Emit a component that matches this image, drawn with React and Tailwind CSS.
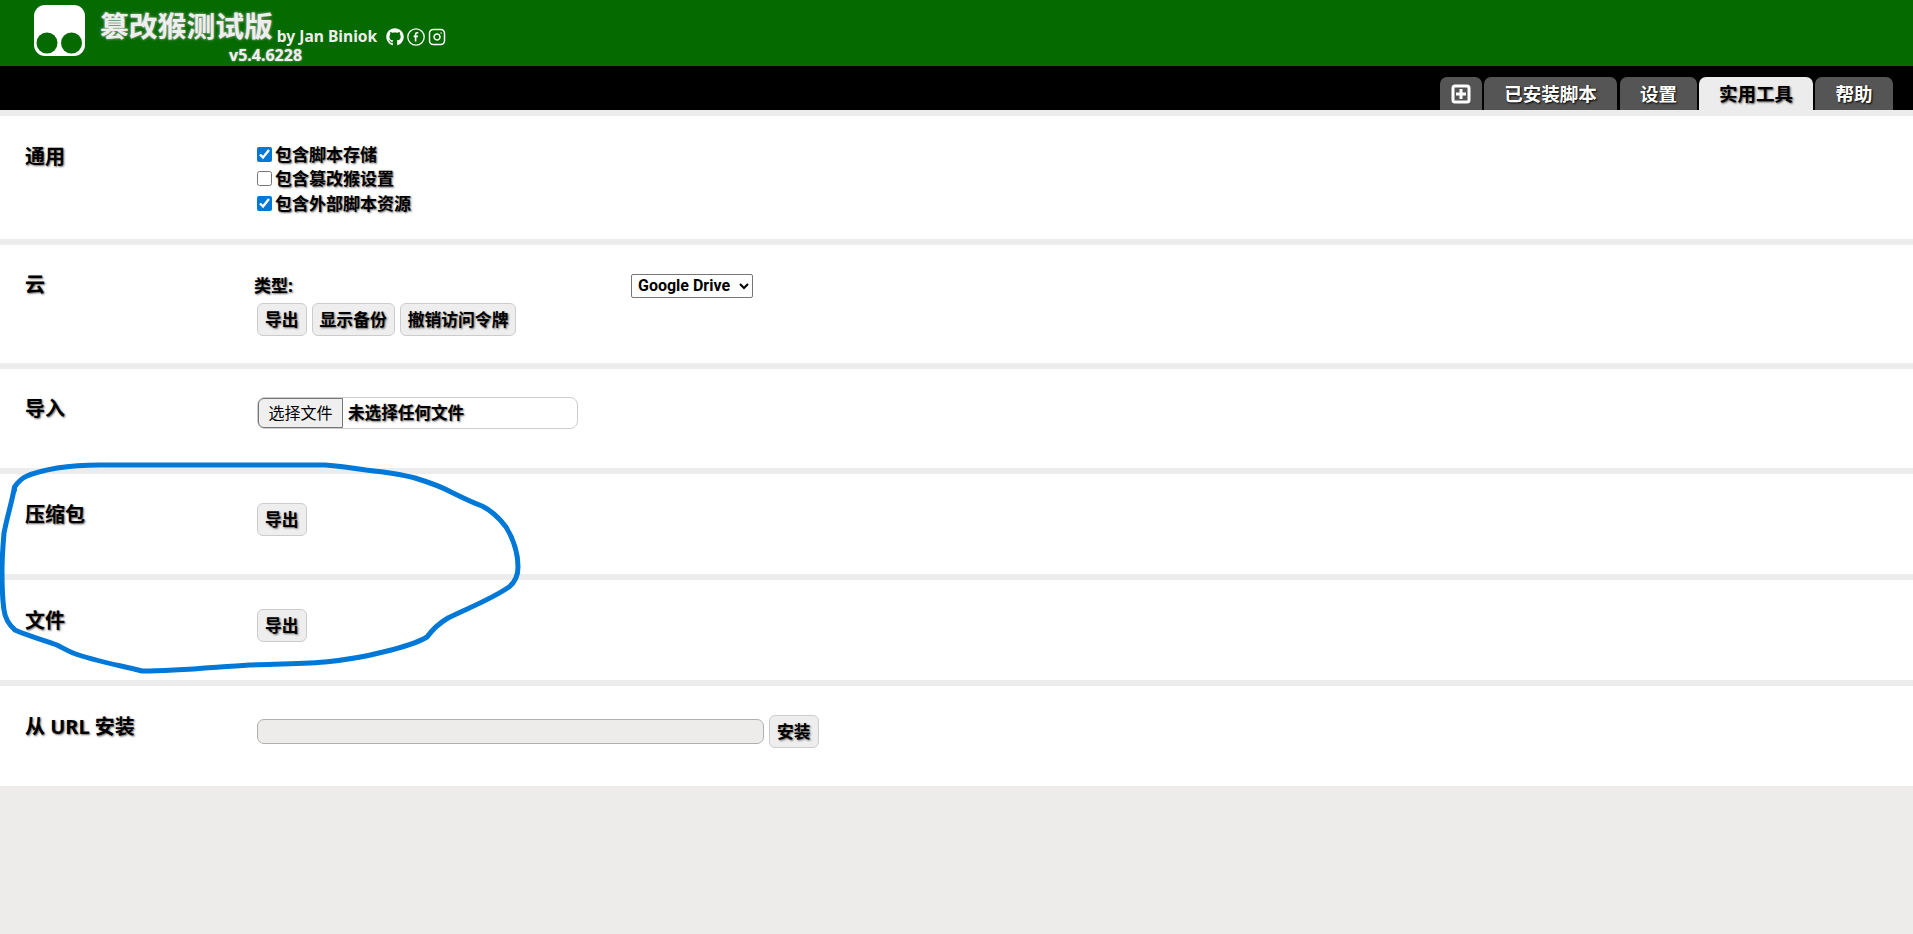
import { FaGithub } from 'react-icons/fa'
import { FiInstagram } from 'react-icons/fi'

const tabs = [
  { label: '已安装脚本', width: 'w-[133px] mr-[1px]' },
  { label: '设置', width: 'w-[77px]' },
  { label: '实用工具', width: 'w-[114px]', active: true },
  { label: '帮助', width: 'w-[78px]' },
]

function Tab({ label, width, active }) {
  return (
    <div
      className={
        active
          ? `${width} h-[33px] rounded-t-[7px] bg-[#ececec] flex items-center justify-center text-[18.5px] font-bold text-black [text-shadow:1px_1px_2px_#555]`
          : `${width} h-[33px] rounded-t-[7px] bg-[#555555] flex items-center justify-center text-[18.5px] font-bold text-white [text-shadow:1px_1px_2px_#000]`
      }
    >
      {label}
    </div>
  )
}

function Section({ label, height, labelClass, children }) {
  return (
    <section className={`${height} bg-white flex`}>
      <h2 className={`${labelClass} w-[257px] shrink-0 pl-[25px] text-[20px] font-bold leading-[28px] text-black [text-shadow:1px_1px_2px_#666]`}>
        {label}
      </h2>
      <div className="flex-1">{children}</div>
    </section>
  )
}

function Btn({ children }) {
  return (
    <button className="h-[33px] px-[7px] rounded-[6px] border border-[#cccccc] bg-[#eeeeee] text-[16.8px] font-bold text-black [text-shadow:1px_1px_2px_#666]">
      {children}
    </button>
  )
}

function Check({ label, checked }) {
  return (
    <label className="h-[24.5px] flex items-center gap-[3px] text-[17px] font-bold text-black [text-shadow:1px_1px_2px_#666]">
      <input type="checkbox" defaultChecked={checked} className="w-[15px] h-[15px] m-0 accent-[#0078d7]" />
      {label}
    </label>
  )
}

export default function App() {
  return (
    <div className="min-h-screen bg-[#edecea] font-['Noto_Sans','Noto_Sans_CJK_SC',sans-serif] relative">
      <header className="h-[66px] bg-[#056a00] flex pl-[34px] pt-[5px] text-[#eeeeee]">
        <svg width="51" height="51" viewBox="0 0 51 51" className="shrink-0">
          <rect width="51" height="51" rx="11" fill="#ffffff" />
          <circle cx="13" cy="38" r="10.5" fill="#056a00" />
          <circle cx="37.5" cy="38" r="10.5" fill="#056a00" />
        </svg>
        <div className="ml-[15px]">
          <div className="flex items-end h-[42px]">
            <span className="text-[28.8px] font-bold leading-[42px] [text-shadow:0_0_3px_#bbbbbb]">篡改猴测试版</span>
            <span className="ml-[4px] text-[15.6px] font-bold leading-[24px] -mb-[1px]">by Jan Biniok</span>
            <div className="ml-[9px] mb-[1px] flex items-center gap-[3px] text-white">
              <FaGithub className="w-[18px] h-[18px]" />
              <svg width="18" height="18" viewBox="0 0 18 18" fill="none" stroke="currentColor">
                <circle cx="9" cy="9" r="8.2" strokeWidth="1.3" />
                <path d="M11.3 4.8h-1.2c-.9 0-1.5.6-1.5 1.6v7.2M6.6 8.4h4.4" strokeWidth="1.6" />
              </svg>
              <FiInstagram className="w-[18px] h-[18px]" />
            </div>
          </div>
          <div className="ml-[129px] text-[16px] font-bold leading-[16px] [text-shadow:0_0_2px_#bbbbbb]">v5.4.6228</div>
        </div>
      </header>

      <nav className="h-[44px] bg-black flex items-end justify-end gap-[2px] pr-[20px]">
        <div className="w-[42px] h-[33px] rounded-t-[7px] bg-[#555555] flex items-center justify-center">
          <svg width="20" height="20" viewBox="0 0 20 20" fill="none" stroke="#ffffff" strokeWidth="3">
            <rect x="2" y="2" width="16" height="16" rx="2" />
            <path d="M10 5v10M5 10h10" />
          </svg>
        </div>
        {tabs.map((t) => (
          <Tab key={t.label} {...t} />
        ))}
      </nav>

      <main className="pt-[6px] flex flex-col gap-[6px] bg-[#ececec]">
        <Section label="通用" height="h-[123px]" labelClass="pt-[27px]">
          <div className="pt-[26px]">
            <Check label="包含脚本存储" checked />
            <Check label="包含篡改猴设置" />
            <Check label="包含外部脚本资源" checked />
          </div>
        </Section>

        <Section label="云" height="h-[118px]" labelClass="pt-[26px]">
          <div className="pt-[28px] flex items-center h-[53px] -ml-[3px] text-[17px] font-bold text-black [text-shadow:1px_1px_2px_#666]">
            <span className="w-[377px]">类型:</span>
            <select className="h-[24px] w-[122px] pl-[2px] border border-[#767676] rounded-[2px] bg-white font-['Roboto',sans-serif] text-[16px] font-bold [text-shadow:none]">
              <option>Google Drive</option>
            </select>
          </div>
          <div className="mt-[5px] flex gap-[5px]">
            <Btn>导出</Btn>
            <Btn>显示备份</Btn>
            <Btn>撤销访问令牌</Btn>
          </div>
        </Section>

        <Section label="导入" height="h-[99px]" labelClass="pt-[26px]">
          <div className="mt-[28px] w-[321px] h-[32px] rounded-[8px] border border-[#cccccc] flex items-center text-[16px]">
            <span className="w-[85px] h-[30px] flex items-center justify-center bg-[#efefef] border border-[#767676] rounded-l-[6px] text-black">
              选择文件
            </span>
            <span className="ml-[5px] text-[16.6px] font-bold text-black [text-shadow:1px_1px_2px_#666]">未选择任何文件</span>
          </div>
        </Section>

        <Section label="压缩包" height="h-[100px]" labelClass="pt-[27px]">
          <div className="mt-[29px]">
            <Btn>导出</Btn>
          </div>
        </Section>

        <Section label="文件" height="h-[100px]" labelClass="pt-[27px]">
          <div className="mt-[29px]">
            <Btn>导出</Btn>
          </div>
        </Section>

        <Section label="从 URL 安装" height="h-[100px]" labelClass="pt-[27px]">
          <div className="mt-[29px] flex items-center gap-[5px]">
            <input className="w-[507px] h-[25px] rounded-[7px] border border-[#b0b0b0] bg-[#edecea]" />
            <Btn>安装</Btn>
          </div>
        </Section>
      </main>

      {/* hand-drawn ink circle over the two sections */}
      <svg className="absolute left-0 top-0 pointer-events-none" width="530" height="690" fill="none">
        <path
          d="M14.5 490L14.5 487C18 482 22 478 27 476C36 472 46 470 57 468C70 466 85 465 100 465L325 465C340 466 353 468 366 470C384 472 400 474 415 478C428 482 440 486 451 492C461 497 471 502 482 506C492 511 500 519 506 527C514 540 518 553 518 567C518 578 514 583 509 587C490 600 468 608 448 618C438 624 432 630 427 637C415 644 400 648 383 652C364 657 345 660 325 662C300 664 275 664 249 665C215 667 180 671 142 671C118 665 95 661 73 653C66 650 63 648 57 645C44 640 28 636 15 630C8 624 5 618 4 610C2 597 2 583 2 570C2 557 3 545 4 533C7 517 12 502 14.5 487"
          stroke="#0078d7"
          strokeWidth="5"
          strokeLinecap="round"
          strokeLinejoin="round"
        />
      </svg>
    </div>
  )
}
